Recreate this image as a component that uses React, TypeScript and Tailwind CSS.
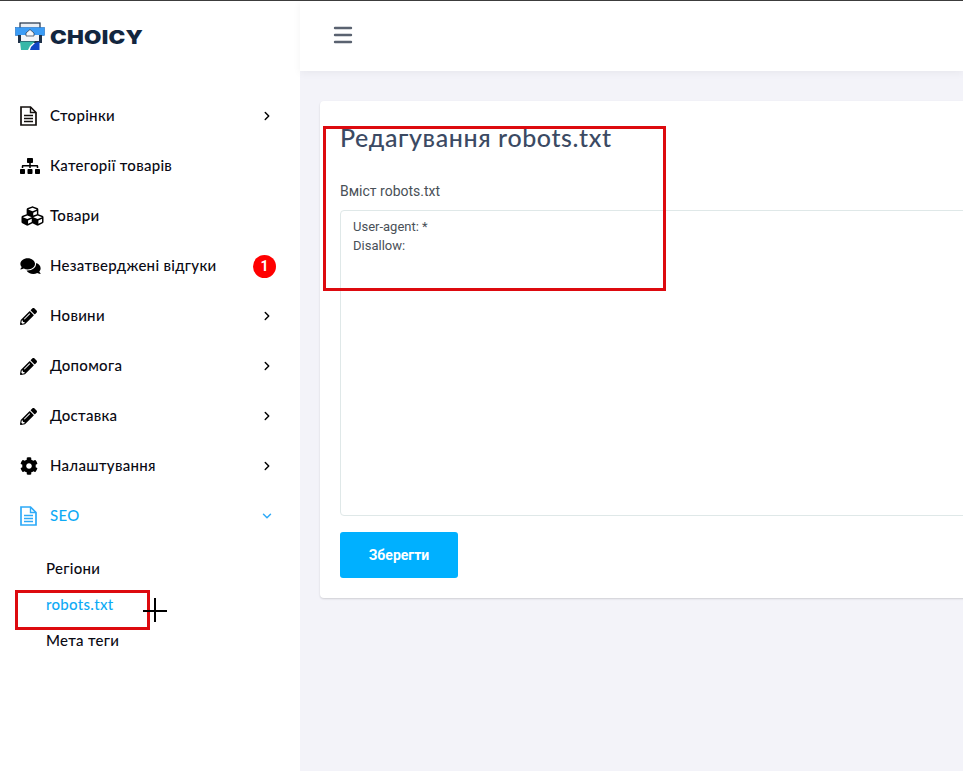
import { FaSitemap, FaCubes, FaComments, FaPencilAlt, FaCog } from 'react-icons/fa'
import { ChevronRight, ChevronDown, Menu } from 'lucide-react'
import type { ReactNode } from 'react'

interface MenuItem {
  label: string
  icon: ReactNode
  arrow?: boolean
  badge?: string
}

function FileIcon({ className }: { className?: string }) {
  return (
    <svg width="17" height="20" viewBox="0 0 17 20" fill="none" stroke="currentColor" className={className}>
      <path d="M1 1 H10.5 L16 6.5 V19 H1 Z" strokeWidth="1.7" />
      <path d="M10.5 1 V6.5 H16" strokeWidth="1.4" />
      <path d="M4 9.5 H13 M4 12.5 H13 M4 15.5 H13" strokeWidth="1.6" />
    </svg>
  )
}

const pencil = <FaPencilAlt className="h-[17px] w-[17px] text-black" />

const items: MenuItem[] = [
  { label: 'Сторінки', icon: <FileIcon className="text-[#14100e]" />, arrow: true },
  { label: 'Категорії товарів', icon: <FaSitemap className="h-[18px] w-[20px] text-black" /> },
  { label: 'Товари', icon: <FaCubes className="h-[22px] w-[25px] text-black" /> },
  { label: 'Незатверджені відгуки', icon: <FaComments className="h-[18px] w-[21px] text-black" />, badge: '1' },
  { label: 'Новини', icon: pencil, arrow: true },
  { label: 'Допомога', icon: pencil, arrow: true },
  { label: 'Доставка', icon: pencil, arrow: true },
  { label: 'Налаштування', icon: <FaCog className="h-[18px] w-[18px] text-black" />, arrow: true }
]

function Logo() {
  return (
    <div className="flex items-center gap-[5px] pt-[2px]">
      <svg width="30" height="30" viewBox="0 0 30 30">
        <rect x="5" y="1" width="20" height="6" fill="#e8edf3" stroke="#1f3148" strokeWidth="1.2" />
        <rect x="0.5" y="5.5" width="29" height="8" fill="#3b9cf5" stroke="#1d6fc4" strokeWidth="0.6" />
        <rect x="3" y="13" width="24" height="8" fill="#1f3148" />
        <rect x="6" y="13" width="18" height="6" fill="#f2f5f8" />
        <path d="M11 11 L15 7.5 L19 11 L19 14 L11 14 Z" fill="#f2f5f8" stroke="#1f3148" strokeWidth="0.7" />
        <path d="M5 19.5 H20 L15 24 L13 28 H6 Z" fill="#36b8a8" />
        <path d="M15 28 L16 25 L20 21 L24.5 19.5 V28 Z" fill="#0f46c4" />
      </svg>
      <span className="origin-left font-['Inter',sans-serif] text-[19px] leading-none font-black tracking-[0.2px] text-[#12263f] [transform:scaleX(1.18)]">
        CHOICY
      </span>
    </div>
  )
}

function Sidebar() {
  return (
    <aside className="w-[300px] shrink-0 bg-white font-['Lato',sans-serif] text-[15px] font-medium text-[#0a0a14]">
      <div className="flex h-[70px] items-center pl-[15px]">
        <Logo />
      </div>
      <nav className="pt-[20px]">
        {items.map(item => (
          <div key={item.label} className="flex h-[50px] items-center pl-[20px] pr-[24px]">
            <span className="flex w-[30px] shrink-0 items-center">{item.icon}</span>
            <span className="mb-[2px] flex-1 tracking-[0.3px]">{item.label}</span>
            {item.arrow ? <ChevronRight className="mr-[2px] h-[14px] w-[14px] text-black" strokeWidth={2.5} /> : null}
            {item.badge ? (
              <span className="flex h-[23px] w-[23px] items-center justify-center rounded-full bg-[#ff0000] font-['Roboto',sans-serif] text-[14px] font-bold text-white">
                {item.badge}
              </span>
            ) : null}
          </div>
        ))}
        <div className="flex h-[50px] items-center pl-[20px] pr-[24px] text-[#0eaaf5]">
          <span className="flex w-[30px] shrink-0 items-center">
            <FileIcon className="text-[#2eaaf8]" />
          </span>
          <span className="mb-[2px] flex-1 tracking-[0.3px]">SEO</span>
          <ChevronDown className="mr-[2px] h-[14px] w-[14px] text-[#2eaaf8]" strokeWidth={2.5} />
        </div>
        <div className="pt-[9px] pl-[46px]">
          <div className="flex h-[36px] items-center tracking-[0.3px]">Регіони</div>
          <div className="flex h-[36px] items-center tracking-[0.3px] text-[#0eaaf5]">robots.txt</div>
          <div className="flex h-[36px] items-center tracking-[0.3px]">Мета теги</div>
        </div>
      </nav>
    </aside>
  )
}

export default function App() {
  return (
    <div className="relative flex h-[771px] w-[963px] overflow-hidden border-t border-[#3c3c3c] bg-[#f3f3f9]">
      <Sidebar />

      <div className="min-w-0 flex-1">
        <header className="flex h-[70px] items-center bg-white pb-[2px] pl-[31px] shadow-[0_2px_8px_rgba(0,0,0,0.05)]">
          <Menu className="h-[24px] w-[24px] text-[#5a6270]" strokeWidth={2.4} />
        </header>

        <main className="pt-[30px] pl-[20px]">
          <section className="mr-[-20px] rounded-[4px] bg-white px-[20px] pt-[22px] pb-[20px] font-['Roboto',sans-serif] shadow-[0_1px_2px_rgba(0,0,0,0.15)]">
            <h1 className="font-['Lato',sans-serif] text-[25px] leading-[28px] font-medium tracking-[0.6px] text-[#3b4a63]">
              Редагування robots.txt
            </h1>
            <label className="mt-[30px] block text-[14px] leading-[20px] text-[#495057]">Вміст robots.txt</label>
            <div className="mt-[9px] mr-[-10px] h-[306px] rounded-[4px] border border-[#dfe8e8] px-[12px] py-[6px] text-[13px] leading-[19px] text-[#495057]">
              <div>User-agent: *</div>
              <div>Disallow:</div>
            </div>
            <button className="mt-[16px] h-[46px] w-[118px] rounded-[3px] bg-[#00b0ff] text-[14px] font-bold text-white">
              Зберегти
            </button>
          </section>
        </main>
      </div>

      {/* annotation marks drawn over the page */}
      <div className="absolute top-[125px] left-[323px] h-[165px] w-[343px] border-[3px] border-[#dd0a0f]" />
      <div className="absolute top-[589px] left-[15px] h-[40px] w-[135px] border-[3px] border-[#dd0a0f]" />
      <div className="absolute top-[609px] left-[143px] h-[2px] w-[24px] bg-black" />
      <div className="absolute top-[597px] left-[154px] h-[24px] w-[2px] bg-black" />
    </div>
  )
}
